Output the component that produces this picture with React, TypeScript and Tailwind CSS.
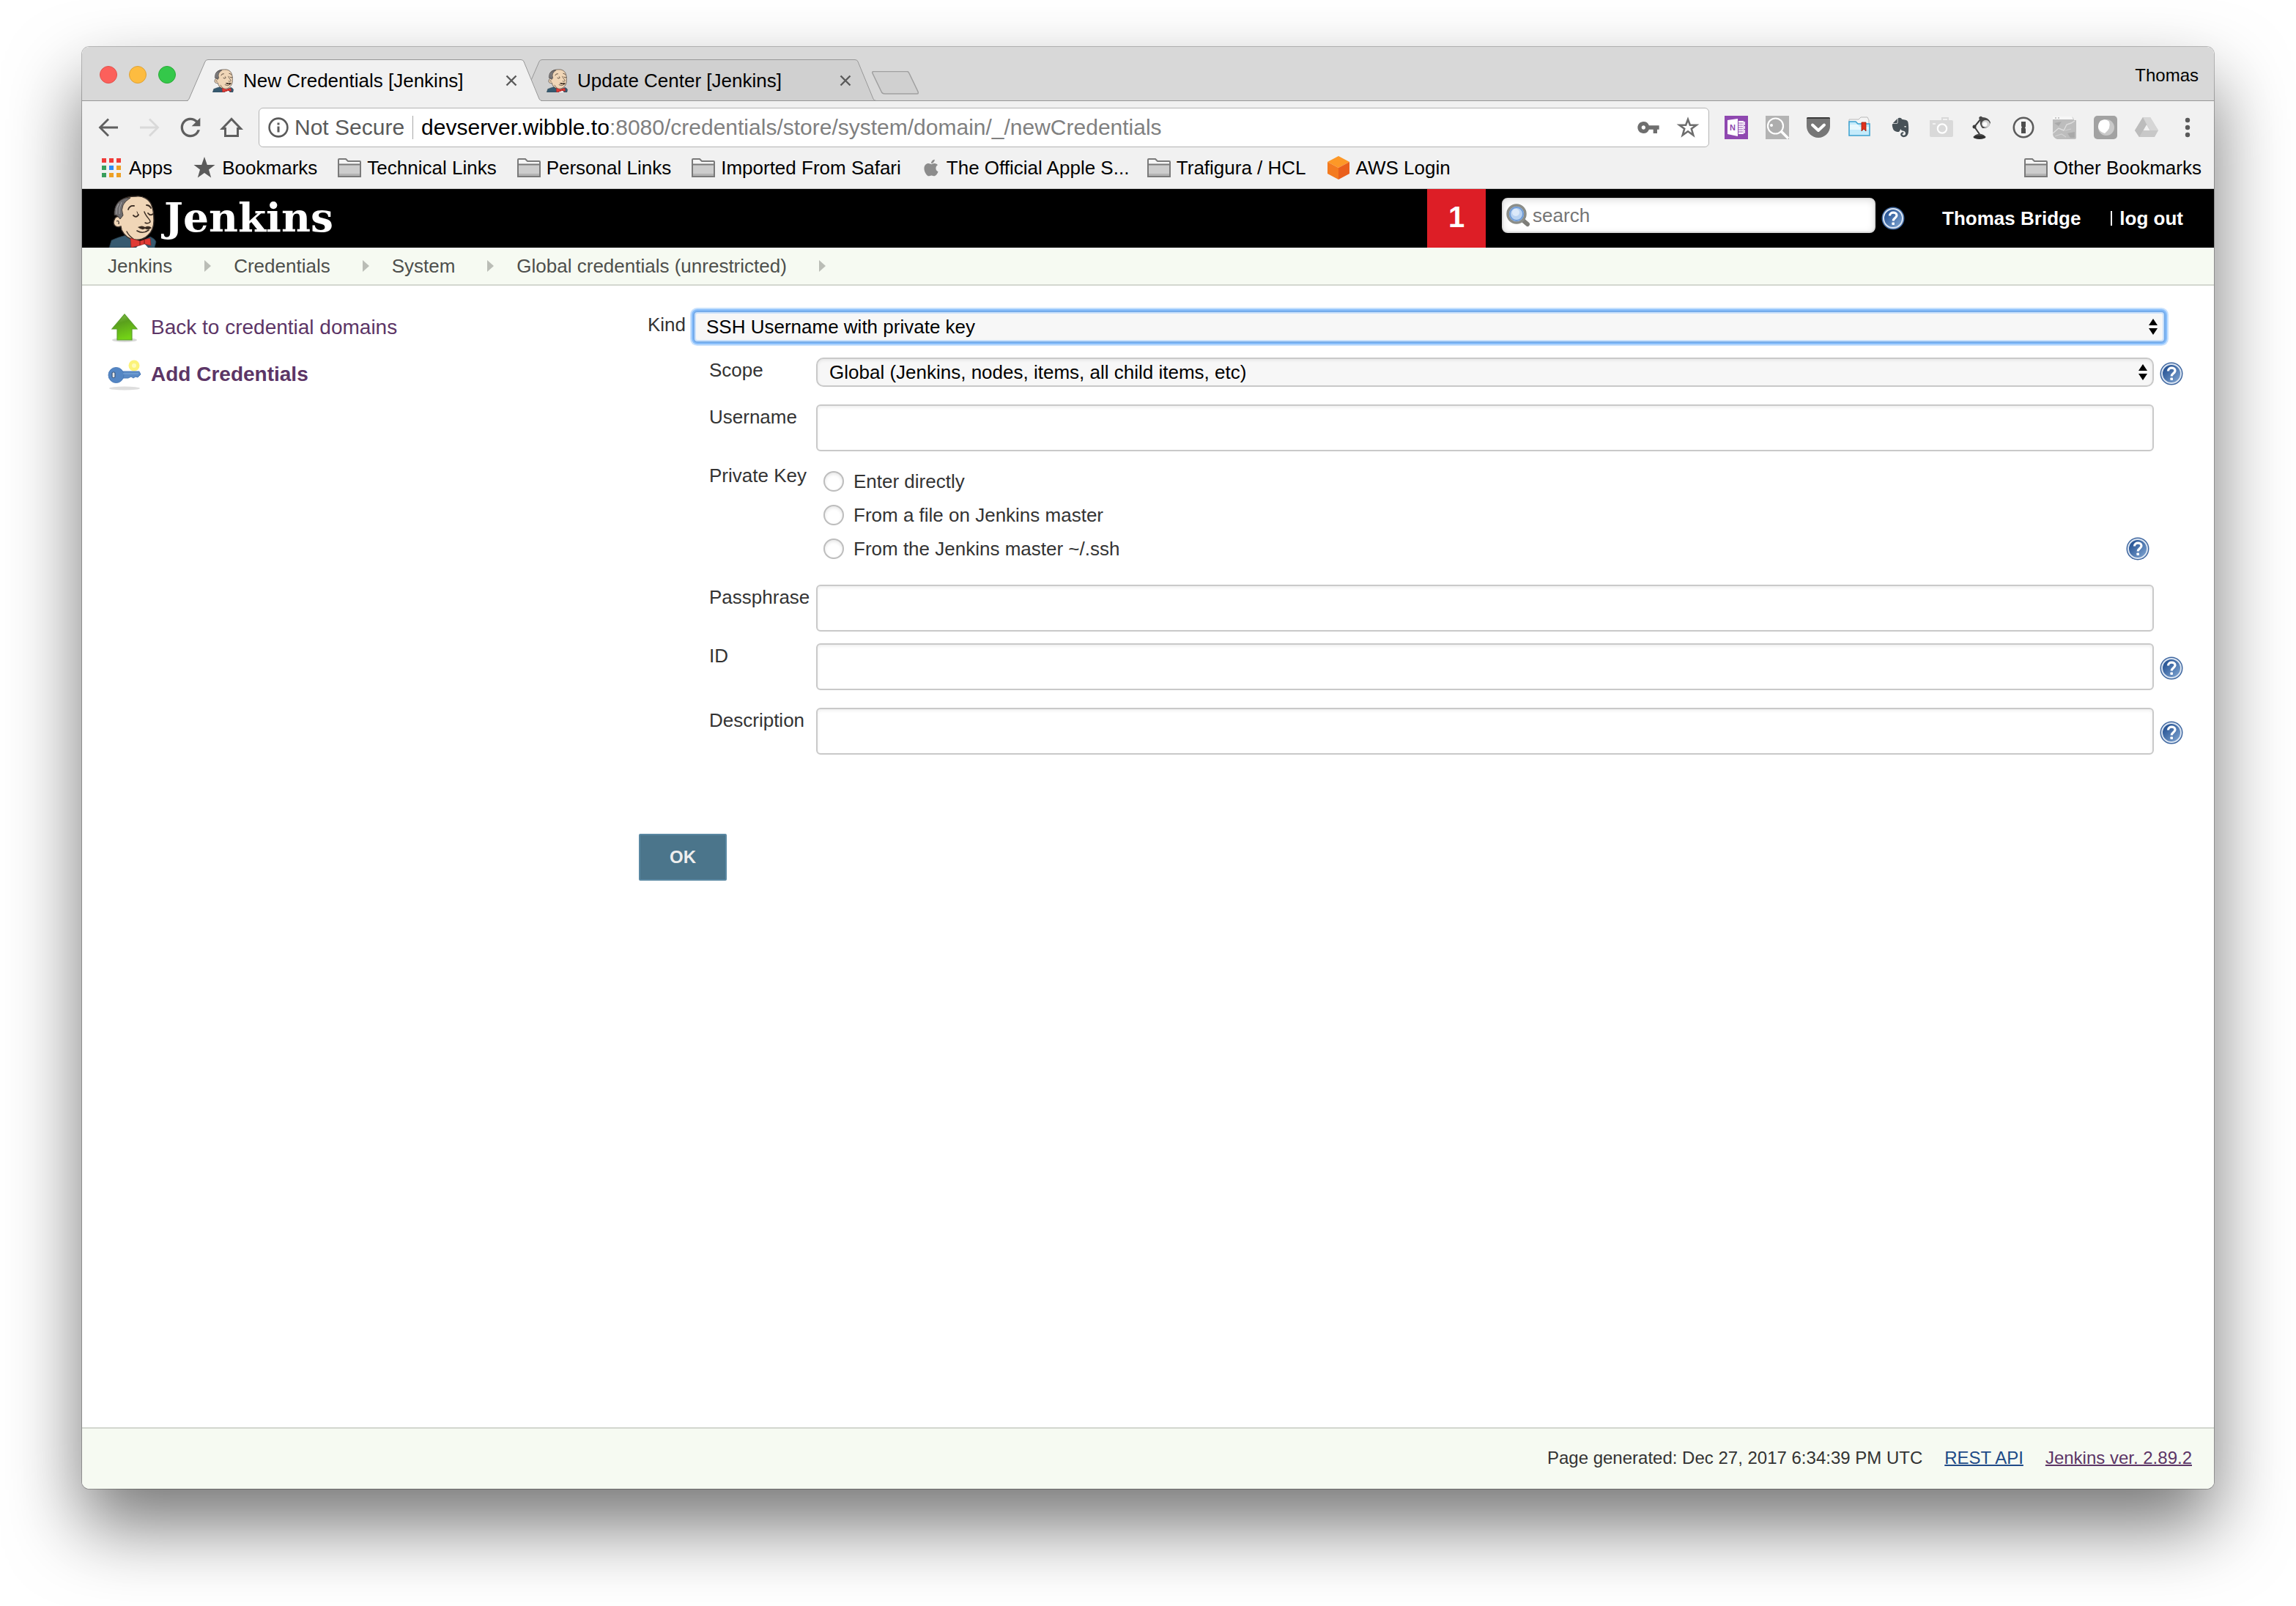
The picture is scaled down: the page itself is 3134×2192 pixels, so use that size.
import { useState, type ReactNode } from "react";
import clsx from "clsx";
import { FaApple, FaEvernote } from "react-icons/fa";
import { MdRefresh, MdVpnKey } from "react-icons/md";

const TABS = [
  { id: "new", title: "New Credentials [Jenkins]", active: true },
  { id: "update", title: "Update Center [Jenkins]", active: false },
];

const CRUMBS = ["Jenkins", "Credentials", "System", "Global credentials (unrestricted)"];

const KEY_SOURCES = [
  { id: "direct", label: "Enter directly", help: false },
  { id: "file", label: "From a file on Jenkins master", help: false },
  { id: "ssh", label: "From the Jenkins master ~/.ssh", help: true },
];

function Butler({ className }: { className?: string }) {
  return (
    <svg viewBox="0 0 66 72" className={className} aria-hidden="true">
      <path d="M1 72 L4 62 Q12 58 24 55 L40 66 L57 57 Q64 60 65 64 L63 72Z" fill="#375a70" stroke="#22343f" strokeWidth="0.8" />
      <path d="M38 2 C47 1 55 6 58 12 C62 20 62 28 62 35 C62 43 60 50 54 55 C50 60 42 62 36 61 C29 61 22 56 18 48 L17 43 C10 46 5 40 8 34 C9 30 12 29 15 30 C8 22 10 12 17 7 C23 3 30 2 38 2Z" fill="#f0d6b7" stroke="#3a302a" strokeWidth="1.4" />
      <path d="M24 4 C13 7 7 15 8 28 Q12 27 16 33 L20 28 Q17 20 20 14 Q22 9 30 4Z" fill="#6d6b6d" stroke="#2b2320" strokeWidth="0.8" />
      <path d="M14 12 Q10 18 11 26 M18 10 Q14 18 15 26" stroke="#a5a3a5" strokeWidth="1" fill="none" />
      <path d="M11 36 Q15 34 14 40" stroke="#2b2320" strokeWidth="1.2" fill="none" />
      <g fill="none" stroke="#3a2c22" strokeWidth="1.8" strokeLinecap="round">
        <path d="M27 20 Q29 14 35 15" />
        <path d="M52 14 Q56 14 58 18" />
        <path d="M34 28 Q38 32 41 27" />
        <path d="M39 23 L41 28" strokeWidth="1" />
        <path d="M54 25 Q57 29 61 26" />
        <path d="M49 23 C51 30 58 34 57 37 Q54 40 50 38" strokeWidth="1.4" />
        <path d="M39 49 Q47 54 55 48" strokeWidth="1.6" />
        <path d="M25 50 Q28 56 34 60" strokeWidth="1.4" />
      </g>
      <path d="M40 44 Q46 41 50 44 Q55 41 59 45 Q54 49 50 46 Q46 49 40 44Z" fill="#3a2c22" />
      <path d="M38 72 L46 63 L54 72Z" fill="#fff" />
      <path d="M30 59 L43 63 L49 61 L57 59 L58 69 L49 67 L43 69 L31 72Z" fill="#e03a34" stroke="#8a221d" strokeWidth="0.6" />
      <path d="M43 63 V69 M49 61 V67" stroke="#81201c" strokeWidth="1.2" />
    </svg>
  );
}

function HelpIcon({ label }: { label: string }) {
  return (
    <button type="button" aria-label={label} className="size-8 shrink-0">
      <svg viewBox="0 0 32 32" className="size-8">
        <defs>
          <linearGradient id="help-fill" x1="0" y1="0" x2="1" y2="1">
            <stop offset="0.2" stopColor="#2b5797" />
            <stop offset="1" stopColor="#86abd6" />
          </linearGradient>
        </defs>
        <circle cx="16" cy="16" r="15.5" fill="#3f67a0" />
        <circle cx="16" cy="16" r="13" fill="url(#help-fill)" stroke="#dbe5f2" strokeWidth="2" />
        <path d="M11.5 12.5 C11.5 6.5 21 7 21 12 C21 15.500 16.200 15.500 16.200 19.500" fill="none" stroke="#fff" strokeWidth="3.200" />
        <rect x="14.400" y="21.500" width="3.600" height="3.600" rx="0.800" fill="#fff" />
      </svg>
    </button>
  );
}

function FolderIcon() {
  return (
    <svg viewBox="0 0 32 26" className="h-[26px] w-8" aria-hidden="true">
      <path d="M1 24 V2 Q1 1 2 1 H11 L14 4 H30 Q31 4 31 5 V24 Q31 25 30 25 H2 Q1 25 1 24Z" fill="#f6f6f6" stroke="#7a7a7a" strokeWidth="2" />
      <path d="M1 8.500 H31 V25 H1Z" fill="#cdcdcd" stroke="#7a7a7a" strokeWidth="2" />
      <path d="M2 22.500 H30" stroke="#b4b4b4" strokeWidth="3" />
    </svg>
  );
}

function AppsIcon() {
  const colors = ["#f03a37", "#f03a37", "#f03a37", "#389e5c", "#2a8cf4", "#eda024", "#389e5c", "#eda024", "#eda024"];
  return (
    <svg viewBox="0 0 32 32" className="size-8" aria-hidden="true">
      {colors.map((c, i) => (
        <rect key={i} x={3 + (i % 3) * 10} y={3 + Math.floor(i / 3) * 10} width="6" height="6" fill={c} />
      ))}
    </svg>
  );
}

function StarSolid() {
  return (
    <svg viewBox="0 0 32 32" className="size-8" aria-hidden="true">
      <path d="M16 1 L19.800 12 H30.500 L22 18.500 L25.200 29.500 L16 23 L6.800 29.500 L10 18.500 L1.500 12 H12.200Z" fill="#5a5a5a" />
    </svg>
  );
}

function AwsIcon() {
  return (
    <svg viewBox="0 0 32 32" className="size-8" aria-hidden="true">
      <path d="M16 0 L31 8 L16 16 L1 8Z" fill="#fd9827" />
      <path d="M1 8 L16 16 V32 L1 24Z" fill="#f47b20" />
      <path d="M31 8 L16 16 V32 L31 24Z" fill="#ea5f1c" />
    </svg>
  );
}

const BOOKMARKS: { label: string; icon: ReactNode }[] = [
  { label: "Apps", icon: <AppsIcon /> },
  { label: "Bookmarks", icon: <StarSolid /> },
  { label: "Technical Links", icon: <FolderIcon /> },
  { label: "Personal Links", icon: <FolderIcon /> },
  { label: "Imported From Safari", icon: <FolderIcon /> },
  { label: "The Official Apple S...", icon: <FaApple className="size-[26px] text-[#8c8c8c]" /> },
  { label: "Trafigura / HCL", icon: <FolderIcon /> },
  { label: "AWS Login", icon: <AwsIcon /> },
];

function Bookmark({ label, icon }: { label: string; icon: ReactNode }) {
  return (
    <a href="#" className="flex items-center gap-2 whitespace-nowrap">
      {icon}
      <span className="max-w-[246px]">{label}</span>
    </a>
  );
}

const EXTENSIONS: { name: string; art: ReactNode }[] = [
  {
    name: "OneNote",
    art: (
      <>
        <rect width="32" height="32" fill="#8f48b0" />
        <path d="M4 6 L18 4 V28 L4 25Z" fill="#fff" />
        <path d="M19 7 H26 V25 H19Z M26.500 8 H28 V13 H26.500Z M26.500 14 H28 V18 H26.500Z M26.500 19 H28 V24 H26.500Z" fill="#fff" />
        <path d="M19 10 H25 M19 13 H25 M19 16 H25 M19 19 H25 M19 22 H25" stroke="#8f48b0" strokeWidth="1.200" />
        <text x="11" y="20" textAnchor="middle" fontSize="11" fontWeight="700" fontFamily="Liberation Sans" fill="#8f48b0">N</text>
      </>
    ),
  },
  {
    name: "Search",
    art: (
      <>
        <rect width="32" height="32" fill="#b3b3b3" />
        <circle cx="13.500" cy="14" r="10.500" fill="#adadad" stroke="#fff" strokeWidth="2.200" />
        <path d="M21 21 L31 31" stroke="#fff" strokeWidth="3.500" />
        <circle cx="8" cy="13" r="2" fill="#fff" />
      </>
    ),
  },
  {
    name: "Pocket",
    art: (
      <>
        <path d="M0 4 Q0 2 2 2 H30 Q32 2 32 4 V14 A16 16 0 0 1 0 14Z" fill="#767676" />
        <path d="M0 4 Q0 2 2 2 H30 Q32 2 32 4Z" fill="#3b3b3b" />
        <path d="M8 12.500 L16 20 L24 12.500" fill="none" stroke="#fff" strokeWidth="4" strokeLinecap="round" strokeLinejoin="round" />
      </>
    ),
  },
  {
    name: "Bookmark folder",
    art: (
      <>
        <path d="M2 8 V5 H15 L18 2 H27 L29 6 V14 H2Z" fill="#f4f4f4" stroke="#b9b9b9" strokeWidth="1" />
        <path d="M2 27 V8 H11 L14 11 H30 V27Z" fill="#c4ebfb" stroke="#3aa0cf" strokeWidth="1.500" />
        <path d="M3 12 H14 L16 15 H29 V19 H3Z" fill="#e8f8fe" />
        <path d="M19 9 H25 V21 L22 18 L19 21Z" fill="#e0311c" stroke="#9c1c10" strokeWidth="0.800" />
      </>
    ),
  },
  {
    name: "Evernote",
    art: <FaEvernote x="1" y="1" size={30} color="#475157" />,
  },
  {
    name: "Camera",
    art: (
      <>
        <path d="M0 6 H16 V2 H26 V6 H30 Q32 6 32 8 V27 Q32 29 30 29 H2 Q0 29 0 27Z" fill="#d9d9d9" />
        <path d="M18 4 H24 V6 H18Z M4 10 H8 V12 H4Z" fill="#f1f1f1" />
        <circle cx="17" cy="17.500" r="6.200" fill="none" stroke="#fff" strokeWidth="2.200" />
      </>
    ),
  },
  {
    name: "Desk lamp",
    art: (
      <>
        <ellipse cx="12" cy="29" rx="8.500" ry="3" fill="#303030" />
        <path d="M5 27 Q12 22 19 27Z" fill="#4d4d4d" />
        <path d="M12 25 L5 15 L14 4" fill="none" stroke="#3b3b3b" strokeWidth="2" />
        <circle cx="5" cy="15" r="2.500" fill="#3b3b3b" />
        <path d="M11 3 Q13 -1 16 2 Q24 2 27 9 Q25 18 16 17 Q12 13 13 7Z" fill="#4a4a4a" />
        <ellipse cx="20.500" cy="11" rx="5.500" ry="5" fill="#d2d2d2" />
        <ellipse cx="19.500" cy="11.500" rx="3" ry="3" fill="#fbfbfb" />
      </>
    ),
  },
  {
    name: "1Password",
    art: (
      <>
        <circle cx="16" cy="16" r="13.200" fill="#f4f4f4" stroke="#5c5c5c" strokeWidth="2.600" />
        <path d="M13 8 H19 V15 L18 16 L19 18 V24 H13 V17 L14 16 L13 14Z" fill="#4e4e4e" />
      </>
    ),
  },
  {
    name: "Map",
    art: (
      <>
        <path d="M0 1 H24 Q28 1 29 6 H32 V30 Q32 32 30 32 H6 Q0 30 0 24Z" fill="#bdbdbd" />
        <path d="M0 1 H26 L28 5 H0Z" fill="#f7f7f7" />
        <path d="M3 3 H5 M7 3 H9" stroke="#b5b5b5" strokeWidth="1.500" />
        <path d="M0 24 L8 17 L15 20 L19 12 L25 10 L30 7" fill="none" stroke="#dedede" strokeWidth="1.400" />
        <path d="M3 28 L12 25 L18 29 M17 20 L25 18" fill="none" stroke="#d2d2d2" strokeWidth="1.200" />
        <path d="M2 10 L12 8 L8 14Z M20 24 L30 22 V30 H24Z" fill="#a9a9a9" />
      </>
    ),
  },
  {
    name: "Shade",
    art: (
      <>
        <rect width="32" height="32" rx="5" fill="#a2a2a2" />
        <circle cx="17" cy="16" r="11" fill="#c9c9c9" />
        <path d="M9 7 Q16 3 21 8 Q24 17 15 24 Q3 20 7 10Z" fill="#fff" />
      </>
    ),
  },
  {
    name: "Drive",
    art: (
      <>
        <path d="M11 2 H21 L32 20 L27 29 H6 L0 20Z M16 12 L11.500 20 H20.500Z" fill="#c8c8c8" fillRule="evenodd" />
        <path d="M11 2 L16 12 L6 29 L0 20Z" fill="#bcbcbc" />
        <path d="M11 2 H21 L32 20 H21Z" fill="#d6d6d6" />
      </>
    ),
  },
];

function BrowserTab({ title, active }: { title: string; active: boolean }) {
  return (
    <div
      role="tab"
      aria-selected={active}
      className={clsx(
        "relative -mb-px flex h-[57px] w-[485px] items-center px-[34px] leading-[30px]",
        active ? "z-10" : "-ml-[29px]",
      )}
    >
      <svg viewBox="0 0 485 57" className="absolute inset-0 size-full" aria-hidden="true">
        <path
          d="M0 56.500 Q2 56 3 54 L25 3 Q26 0.500 29 0.500 H456 Q459 0.500 460 3 L481 54 Q482 56.500 485 56.500"
          fill={active ? "#f1f1f1" : "#d0d0d0"}
          stroke="#979797"
        />
        {!active && <path d="M0 56.500 H485" stroke="#979797" />}
        {active && <path d="M2 56.500 H483" stroke="#f1f1f1" strokeWidth="1" />}
      </svg>
      <Butler className="relative h-8 w-[31px]" />
      <span className="relative ml-3 flex-1 whitespace-nowrap">{title}</span>
      <button type="button" aria-label={`Close ${title}`} className="relative">
        <svg viewBox="0 0 16 16" className="size-4">
          <path d="M1.500 1.500 L14.500 14.500 M14.500 1.500 L1.500 14.500" stroke="#5a5a5a" strokeWidth="2.400" />
        </svg>
      </button>
    </div>
  );
}

function BrowserChrome() {
  return (
    <header className="bg-[#f1f1f1]">
      <div className="flex h-[74px] items-end border-b border-[#979797] bg-[#d8d8d8] pl-6">
        <div className="mb-[23px] flex gap-4">
          <button type="button" aria-label="Close" className="size-6 rounded-full border border-[#e2524c] bg-[#fc605b]" />
          <button type="button" aria-label="Minimise" className="size-6 rounded-full border border-[#dea236] bg-[#fdbc40]" />
          <button type="button" aria-label="Zoom" className="size-6 rounded-full border border-[#2aab37] bg-[#34c84a]" />
        </div>
        <div role="tablist" className="ml-[15px] flex">
          {TABS.map((t) => (
            <BrowserTab key={t.id} title={t.title} active={t.active} />
          ))}
        </div>
        <button type="button" aria-label="New tab" className="-ml-2 mb-2">
          <svg viewBox="0 0 68 32" className="h-8 w-[68px]">
            <path d="M5 0.500 H50 Q52 0.500 53 3 L65 28 Q66 31 64 31 H20 Q16 31 15 28 L3 3 Q2 0.500 5 0.500Z" fill="#d0d0d0" stroke="#a0a0a0" strokeWidth="1.500" />
          </svg>
        </button>
        <span className="mr-[21px] mb-5 ml-auto text-2xl leading-7">Thomas</span>
      </div>

      {/* Toolbar */}
      <div className="flex items-center gap-[21px] px-5 pt-[9px]">
        <div className="flex gap-6 text-[#5f5f5f]">
          <button type="button" aria-label="Back">
            <svg viewBox="0 0 32 32" className="size-8">
              <path d="M29 16 H5 M16 4.500 L4.500 16 L16 27.500" fill="none" stroke="currentColor" strokeWidth="2.800" />
            </svg>
          </button>
          <button type="button" aria-label="Forward" disabled className="text-[#d9d9d9]">
            <svg viewBox="0 0 32 32" className="size-8">
              <path d="M3 16 H27 M16 4.500 L27.500 16 L16 27.500" fill="none" stroke="currentColor" strokeWidth="2.800" />
            </svg>
          </button>
          <button type="button" aria-label="Reload" className="flex size-8 items-center justify-center">
            <MdRefresh className="size-10 shrink-0" />
          </button>
          <button type="button" aria-label="Home">
            <svg viewBox="0 0 32 32" className="size-8">
              <path d="M3.500 17.500 L16 4.500 L28.500 17.500 H24.500 V27.500 H7.500 V17.500Z" fill="none" stroke="currentColor" strokeWidth="3" />
            </svg>
          </button>
        </div>
        <div className="flex h-[54px] flex-1 items-center rounded-md border border-[#b4b4b4] bg-white px-3 text-[30px] leading-9 whitespace-nowrap">
          <svg viewBox="0 0 28 28" className="size-7" aria-hidden="true">
            <circle cx="14" cy="14" r="12.400" fill="none" stroke="#5a5a5a" strokeWidth="2.600" />
            <path d="M12.500 7.500 H15.500 V10.500 H12.500Z M12.500 12.500 H15.500 V20.500 H12.500Z" fill="#5a5a5a" />
          </svg>
          <span className="ml-2 text-[#5a5a5a]">Not Secure</span>
          <span className="mx-[11px] h-8 border-l border-[#a8a8a8]" />
          <span className="flex-1 text-[#808080]">
            <span className="text-black">devserver.wibble.to</span>:8080/credentials/store/system/domain/_/newCredentials
          </span>
          <button type="button" aria-label="Saved passwords" className="mr-[22px]">
            <MdVpnKey className="size-8 text-[#6e6e6e]" />
          </button>
          <button type="button" aria-label="Bookmark this page">
            <svg viewBox="0 0 32 32" className="size-8">
              <path d="M16 5 L18.900 12.800 H27.500 L20.800 17.800 L23.300 26.500 L16 21.300 L8.700 26.500 L11.200 17.800 L4.500 12.800 H13.100Z" fill="none" stroke="#6e6e6e" strokeWidth="2.600" />
            </svg>
          </button>
        </div>
        <div className="flex gap-6">
          {EXTENSIONS.map((e) => (
            <button key={e.name} type="button" aria-label={e.name}>
              <svg viewBox="0 0 32 32" className="size-8">
                {e.art}
              </svg>
            </button>
          ))}
          <button type="button" aria-label="Menu">
            <svg viewBox="0 0 32 32" className="size-8" fill="#5a5a5a">
              <circle cx="16" cy="6" r="3.200" />
              <circle cx="16" cy="16" r="3.200" />
              <circle cx="16" cy="26" r="3.200" />
            </svg>
          </button>
        </div>
      </div>

      {/* Bookmarks bar */}
      <nav aria-label="Bookmarks" className="flex h-[57px] items-center gap-7 border-b border-[#c6c6c6] pr-[17px] pl-6 leading-[30px]">
        {BOOKMARKS.map((b) => (
          <Bookmark key={b.label} label={b.label} icon={b.icon} />
        ))}
        <div className="ml-auto">
          <Bookmark label="Other Bookmarks" icon={<FolderIcon />} />
        </div>
      </nav>
    </header>
  );
}

function JenkinsHeader() {
  return (
    <div className="flex h-20 items-center bg-black pl-9 font-bold text-white">
      <a href="#" className="flex h-full items-end gap-2.5">
        <Butler className="h-[72px] w-[66px]" />
        <span className="font-['DejaVu_Serif',serif] text-[55px] leading-[82px]">Jenkins</span>
      </a>
      <a href="#" className="ml-auto flex h-full w-20 items-center justify-center bg-[#dd1e26] pb-1 text-[40px]">
        1
      </a>
      <form className="ml-[22px] flex items-center gap-2" onSubmit={(e) => e.preventDefault()}>
        <div className="relative mb-2">
          <svg viewBox="0 0 32 32" className="absolute top-2 left-1.5 size-8" aria-hidden="true">
            <path d="M22 22 L29 28" stroke="#7d7d78" strokeWidth="6" strokeLinecap="round" />
            <circle cx="14" cy="14" r="12" fill="#a9c8ee" stroke="#8b8d88" strokeWidth="3.500" />
            <circle cx="14" cy="14" r="9" fill="#b9d3f2" stroke="#6f9bd6" strokeWidth="2" />
            <circle cx="13" cy="12" r="5" fill="#dbe9fa" />
          </svg>
          <input
            type="text"
            aria-label="Search"
            placeholder="search"
            className="block h-12 w-[510px] rounded-[8px] border-2 border-[#dcdcdc] bg-white pl-10 text-[26px] font-normal text-black shadow-[inset_0_2px_10px_rgba(0,0,0,0.12)] placeholder:text-[#757575]"
          />
        </div>
        <HelpIcon label="Help for search" />
      </form>
      <a href="#" className="ml-[51px]">Thomas Bridge</a>
      <span className="ml-[41px] h-5 border-l-2 border-white" />
      <a href="#" className="mr-[42px] ml-2.5">log out</a>
    </div>
  );
}

function UpDown() {
  return (
    <svg viewBox="0 0 12 24" className="pointer-events-none absolute top-1/2 right-[9px] h-6 w-3 -translate-y-1/2" aria-hidden="true">
      <path d="M0 10 L6 1 L12 10Z M0 14 L6 23 L12 14Z" />
    </svg>
  );
}

function Row({ label, htmlFor, help, children }: { label: string; htmlFor?: string; help?: boolean; children: ReactNode }) {
  return (
    <div className="flex pl-24">
      <label htmlFor={htmlFor} className="w-[146px] shrink-0 pt-0.5">
        {label}
      </label>
      <div className="flex-1">{children}</div>
      <div className="ml-2 flex w-8 items-center pt-1">{help && <HelpIcon label={`Help for ${label}`} />}</div>
    </div>
  );
}

function TextField({ id, type = "text" }: { id: string; type?: string }) {
  return (
    <input
      id={id}
      type={type}
      className="block h-16 w-full rounded-md border-2 border-[#c9c9c9] bg-white px-3 shadow-[inset_0_2px_4px_rgba(0,0,0,0.07)]"
    />
  );
}

function CredentialsForm() {
  const [source, setSource] = useState<string | null>(null);

  return (
    <form className="flex-1 pt-9 pr-[42px] leading-[30px] text-[#333]" onSubmit={(e) => e.preventDefault()}>
      <div className="mr-[26px] flex pl-3">
        <label htmlFor="kind" className="w-16 pt-0.5">
          Kind
        </label>
        <div className="relative flex-1">
          <select
            id="kind"
            className="block h-10 w-full appearance-none rounded-sm border-2 border-[#c9e0fa] bg-[#f7f7f7] pl-3.5 text-black shadow-[0_0_0_2px_#74abea,0_0_0_4px_#88befb,0_0_0_6px_#c6e0fd] outline-none"
          >
            <option>SSH Username with private key</option>
          </select>
          <UpDown />
        </div>
      </div>

      <div className="mt-[22px]">
        <Row label="Scope" htmlFor="scope" help>
          <div className="relative">
            <select
              id="scope"
              className="block h-10 w-full appearance-none rounded-[10px] border-2 border-[#c9c9c9] bg-[#f7f7f7] pl-4 text-black shadow-[inset_0_2px_4px_rgba(0,0,0,0.07)]"
            >
              <option>Global (Jenkins, nodes, items, all child items, etc)</option>
            </select>
            <UpDown />
          </div>
        </Row>
      </div>
      <div className="mt-6">
        <Row label="Username" htmlFor="username">
          <TextField id="username" />
        </Row>
      </div>
      <div className="mt-4">
        <Row label="Private Key">
          <div role="radiogroup" aria-label="Private Key" className="flex flex-col gap-4 pt-2.5 pr-1.5 pb-[18px] pl-2.5">
            {KEY_SOURCES.map((k) => (
              <div key={k.id} className="flex h-[30px] items-center">
                <input
                  id={k.id}
                  type="radio"
                  name="source"
                  checked={source === k.id}
                  onChange={() => setSource(k.id)}
                  className="size-7 appearance-none rounded-full border-2 border-[#bdbdbd] bg-white shadow-[inset_0_2px_4px_rgba(0,0,0,0.1)] checked:border-8 checked:border-[#4a90e2]"
                />
                <label htmlFor={k.id} className="ml-[13px] flex-1">
                  {k.label}
                </label>
                {k.help && <HelpIcon label={`Help for ${k.label}`} />}
              </div>
            ))}
          </div>
        </Row>
      </div>
      <div className="mt-4">
        <Row label="Passphrase" htmlFor="passphrase">
          <TextField id="passphrase" type="password" />
        </Row>
      </div>
      <div className="mt-4">
        <Row label="ID" htmlFor="cred-id" help>
          <TextField id="cred-id" />
        </Row>
      </div>
      <div className="mt-6">
        <Row label="Description" htmlFor="description" help>
          <TextField id="description" />
        </Row>
      </div>

      <button type="submit" className="mt-[108px] h-16 w-[120px] rounded-xs border-2 border-[#5a88a2] bg-[#4b758b] text-2xl font-bold text-[#eee]">
        OK
      </button>
    </form>
  );
}

function SidePanel() {
  return (
    <nav aria-label="Tasks" className="w-[760px] shrink-0 pt-[25px] pl-[34px] text-[28px] text-[#5c3566]">
      <a href="#" className="flex h-16 items-center gap-3">
        <svg viewBox="0 0 48 48" className="size-12" aria-hidden="true">
          <defs>
            <linearGradient id="up-fill" x1="0" y1="0" x2="0.300" y2="1">
              <stop offset="0" stopColor="#8cc25a" />
              <stop offset="0.400" stopColor="#5aa01c" />
              <stop offset="1" stopColor="#73d216" />
            </linearGradient>
          </defs>
          <ellipse cx="24" cy="41" rx="17" ry="3" fill="#000" opacity="0.150" />
          <path d="M24 6 L41 26 H34 V41 H14 V26 H7Z" fill="url(#up-fill)" stroke="#5da02c" strokeWidth="1.200" />
        </svg>
        Back to credential domains
      </a>
      <a href="#" className="flex h-16 items-center gap-3 font-bold">
        <svg viewBox="0 0 48 48" className="size-12" aria-hidden="true">
          <ellipse cx="24" cy="43" rx="21" ry="2.500" fill="#000" opacity="0.130" />
          <circle cx="37" cy="12" r="7.500" fill="#fcf37a" />
          <circle cx="37" cy="12" r="3" fill="#fffbb8" />
          <path d="M20 20 H44 L46 24 L42 28 L39 27 L36 29 L33 27 L29 29 L20 29Z" fill="#5b8bc6" stroke="#4b7bb8" strokeWidth="1" />
          <circle cx="12.500" cy="25" r="10.500" fill="#5486c4" stroke="#4b7bb8" strokeWidth="1" />
          <path d="M22 23 H43" stroke="#7ba5d6" strokeWidth="1.200" />
          <rect x="7" y="21" width="4" height="7.500" rx="1.500" fill="#e6e6e6" stroke="#3d5a80" strokeWidth="1.200" />
        </svg>
        Add Credentials
      </a>
    </nav>
  );
}

export default function App() {
  return (
    <div className="flex min-h-screen flex-col bg-white px-28 pt-16 pb-40 font-['Liberation_Sans',Arial,sans-serif] text-[26px] text-black">
      <div className="flex flex-1 flex-col rounded-[10px] shadow-[0_0_0_1px_rgba(0,0,0,0.25),0_50px_100px_rgba(0,0,0,0.54)]">
        <div className="flex flex-1 flex-col overflow-hidden rounded-[10px] bg-white">
          <BrowserChrome />
          <JenkinsHeader />
          <nav aria-label="Breadcrumb" className="flex h-[52px] items-center border-b-2 border-[#d3d7cf] bg-[#f6faf2] pl-[35px] text-[#4d4f4c]">
            {CRUMBS.map((c) => (
              <span key={c} className="flex items-center">
                <a href="#">{c}</a>
                <svg viewBox="0 0 9 16" className="mr-[31px] ml-11 h-4 w-[9px]" aria-hidden="true">
                  <path d="M0 0 L9 8 L0 16Z" fill="#babdb6" />
                </svg>
              </span>
            ))}
          </nav>
          <main className="flex flex-1">
            <SidePanel />
            <CredentialsForm />
          </main>
          <footer className="flex h-[84px] items-center justify-end gap-[30px] border-t-2 border-[#d3d7cf] bg-[#f6faf2] pr-[30px] pb-0.5 text-2xl text-[#333]">
            <span>Page generated: Dec 27, 2017 6:34:39 PM UTC</span>
            <a href="#" className="text-[#204a87] underline decoration-2">REST API</a>
            <a href="#" className="text-[#5c3566] underline decoration-2">Jenkins ver. 2.89.2</a>
          </footer>
        </div>
      </div>
    </div>
  );
}
